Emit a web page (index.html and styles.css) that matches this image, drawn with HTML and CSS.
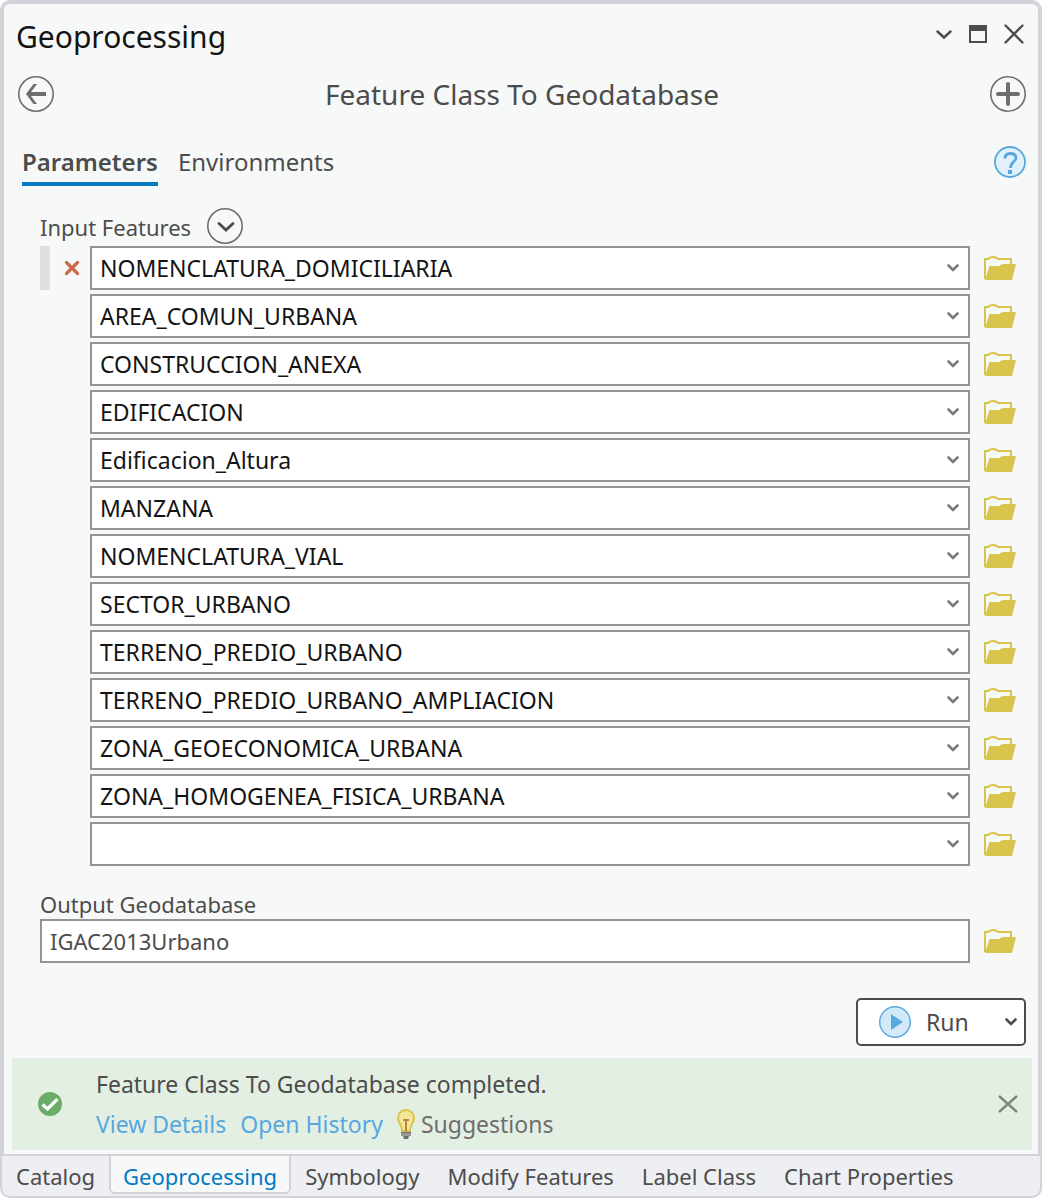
FILE: index.html
```html
<!DOCTYPE html>
<html lang="en">
<head>
<meta charset="utf-8">
<title>Geoprocessing</title>
<meta name="viewport" content="width=device-width, initial-scale=1">
<link rel="stylesheet" href="styles.css">
</head>
<body>
<svg class="sprite" aria-hidden="true">
  <symbol id="chevron" viewBox="0 0 12 8"><path d="M1.500 1.500 6 6 10.500 1.500" fill="none" stroke="currentColor" stroke-width="2.600" stroke-linecap="round"/></symbol>
  <symbol id="folder" viewBox="0 0 32 24"><path d="M1 23V3h3Q6 1 9 1T14 3h13v6" fill="none" stroke="#d9c54d" stroke-width="2"/><path d="M1 24 5.500 10H15q2-2 5-2h12l-4 16z" fill="#d9c54d"/></symbol>
</svg>
<div class="shell">
  <main class="pane">
    <header class="titlebar">
      <h1 class="title">Geoprocessing</h1>
      <div class="window-buttons">
        <button class="icon-button" aria-label="Menu"><svg width="16" height="20" viewBox="0 0 16 20"><path d="M1.500 7.500 8 13.500 14.500 7.500" fill="none" stroke="#4c4c4c" stroke-width="2.400" stroke-linecap="round"/></svg></button>
        <button class="icon-button" aria-label="Maximize"><svg width="18" height="20" viewBox="0 0 18 20"><path d="M1 2h16v16H1z" fill="none" stroke="#4c4c4c" stroke-width="2"/><path d="M0 1h18v6H0z" fill="#4c4c4c"/></svg></button>
        <button class="icon-button" aria-label="Close"><svg width="20" height="20" viewBox="0 0 20 20"><path d="M1.500 1.500 18.500 18.500M18.500 1.500 1.500 18.500" stroke="#4c4c4c" stroke-width="2.300" stroke-linecap="round"/></svg></button>
      </div>
    </header>

    <div class="toolbar">
      <button class="icon-button" aria-label="Back"><svg width="36" height="36" viewBox="0 0 36 36"><circle cx="18" cy="18" r="17.200" fill="none" stroke="#6e6e6e" stroke-width="1.600"/><path d="M28 18H11" stroke="#6e6e6e" stroke-width="4.200"/><path d="M15.500 8H19L11.500 18 19 28h-3.500L8 18z" fill="#6e6e6e"/></svg></button>
      <h2 class="tool-name">Feature Class To Geodatabase</h2>
      <button class="icon-button" aria-label="Add"><svg width="36" height="36" viewBox="0 0 36 36"><circle cx="18" cy="18" r="17.200" fill="none" stroke="#6e6e6e" stroke-width="1.600"/><path d="M18 8v20M8 18h20" stroke="#6e6e6e" stroke-width="4" stroke-linecap="round"/></svg></button>
    </div>

    <nav class="sections">
      <a class="section current" href="#parameters">Parameters</a>
      <a class="section" href="#environments">Environments</a>
      <button class="icon-button help" aria-label="Help"><svg width="32" height="32" viewBox="0 0 32 32"><circle cx="16" cy="16" r="15" fill="#e2f0fb" stroke="#57a8de" stroke-width="1.800"/><path d="M11 12.500C11 9 13 7.500 16.200 7.500S22 9 22 12C22 15.500 16.500 16 16.500 22" fill="none" stroke="#57a8de" stroke-width="2.800"/><path d="M14 24h4v4h-4z" fill="#57a8de"/></svg></button>
    </nav>

    <form class="form" id="parameters">
      <div class="group-label">
        <span class="label" id="inputs-label">Input Features</span>
        <button type="button" class="icon-button" aria-label="Add many"><svg width="36" height="36" viewBox="0 0 36 36"><circle cx="18" cy="18" r="17.200" fill="none" stroke="#6e6e6e" stroke-width="1.600"/><path d="M12 15.500 19 22 26 15.500" fill="none" stroke="#4c4c4c" stroke-width="2.800" stroke-linecap="round"/></svg></button>
      </div>
      <div class="rows" role="group" aria-labelledby="inputs-label">
        <div class="row">
          <span class="row-tools"><span class="grip"></span><button type="button" class="icon-button" aria-label="Remove"><svg width="16" height="16" viewBox="0 0 16 16"><path d="M2.500 2.500 13.500 13.500M13.500 2.500 2.500 13.500" stroke="#cc6a4c" stroke-width="3.200" stroke-linecap="round"/></svg></button></span>
          <span class="combo"><select class="field" aria-label="Input feature 1"><option>NOMENCLATURA_DOMICILIARIA</option></select><svg class="arrow"><use href="#chevron"/></svg></span>
          <button type="button" class="icon-button" aria-label="Browse"><svg class="folder"><use href="#folder"/></svg></button>
        </div>
        <div class="row">
          <span class="combo"><select class="field" aria-label="Input feature 2"><option>AREA_COMUN_URBANA</option></select><svg class="arrow"><use href="#chevron"/></svg></span>
          <button type="button" class="icon-button" aria-label="Browse"><svg class="folder"><use href="#folder"/></svg></button>
        </div>
        <div class="row">
          <span class="combo"><select class="field" aria-label="Input feature 3"><option>CONSTRUCCION_ANEXA</option></select><svg class="arrow"><use href="#chevron"/></svg></span>
          <button type="button" class="icon-button" aria-label="Browse"><svg class="folder"><use href="#folder"/></svg></button>
        </div>
        <div class="row">
          <span class="combo"><select class="field" aria-label="Input feature 4"><option>EDIFICACION</option></select><svg class="arrow"><use href="#chevron"/></svg></span>
          <button type="button" class="icon-button" aria-label="Browse"><svg class="folder"><use href="#folder"/></svg></button>
        </div>
        <div class="row">
          <span class="combo"><select class="field" aria-label="Input feature 5"><option>Edificacion_Altura</option></select><svg class="arrow"><use href="#chevron"/></svg></span>
          <button type="button" class="icon-button" aria-label="Browse"><svg class="folder"><use href="#folder"/></svg></button>
        </div>
        <div class="row">
          <span class="combo"><select class="field" aria-label="Input feature 6"><option>MANZANA</option></select><svg class="arrow"><use href="#chevron"/></svg></span>
          <button type="button" class="icon-button" aria-label="Browse"><svg class="folder"><use href="#folder"/></svg></button>
        </div>
        <div class="row">
          <span class="combo"><select class="field" aria-label="Input feature 7"><option>NOMENCLATURA_VIAL</option></select><svg class="arrow"><use href="#chevron"/></svg></span>
          <button type="button" class="icon-button" aria-label="Browse"><svg class="folder"><use href="#folder"/></svg></button>
        </div>
        <div class="row">
          <span class="combo"><select class="field" aria-label="Input feature 8"><option>SECTOR_URBANO</option></select><svg class="arrow"><use href="#chevron"/></svg></span>
          <button type="button" class="icon-button" aria-label="Browse"><svg class="folder"><use href="#folder"/></svg></button>
        </div>
        <div class="row">
          <span class="combo"><select class="field" aria-label="Input feature 9"><option>TERRENO_PREDIO_URBANO</option></select><svg class="arrow"><use href="#chevron"/></svg></span>
          <button type="button" class="icon-button" aria-label="Browse"><svg class="folder"><use href="#folder"/></svg></button>
        </div>
        <div class="row">
          <span class="combo"><select class="field" aria-label="Input feature 10"><option>TERRENO_PREDIO_URBANO_AMPLIACION</option></select><svg class="arrow"><use href="#chevron"/></svg></span>
          <button type="button" class="icon-button" aria-label="Browse"><svg class="folder"><use href="#folder"/></svg></button>
        </div>
        <div class="row">
          <span class="combo"><select class="field" aria-label="Input feature 11"><option>ZONA_GEOECONOMICA_URBANA</option></select><svg class="arrow"><use href="#chevron"/></svg></span>
          <button type="button" class="icon-button" aria-label="Browse"><svg class="folder"><use href="#folder"/></svg></button>
        </div>
        <div class="row">
          <span class="combo"><select class="field" aria-label="Input feature 12"><option>ZONA_HOMOGENEA_FISICA_URBANA</option></select><svg class="arrow"><use href="#chevron"/></svg></span>
          <button type="button" class="icon-button" aria-label="Browse"><svg class="folder"><use href="#folder"/></svg></button>
        </div>
        <div class="row">
          <span class="combo"><select class="field" aria-label="Input feature 13"><option></option></select><svg class="arrow"><use href="#chevron"/></svg></span>
          <button type="button" class="icon-button" aria-label="Browse"><svg class="folder"><use href="#folder"/></svg></button>
        </div>
      </div>
      <label class="label output-label" for="output">Output Geodatabase</label>
      <div class="output-row">
        <input class="field output" id="output" type="text" value="IGAC2013Urbano">
        <button type="button" class="icon-button" aria-label="Browse"><svg class="folder"><use href="#folder"/></svg></button>
      </div>
    </form>

    <div class="actions">
      <button class="run">
        <svg width="32" height="32" viewBox="0 0 32 32"><circle cx="16" cy="16" r="15.300" fill="#d3e9f8" stroke="#57a8de" stroke-width="1.400"/><path d="M12 8 24 16 12 24z" fill="#57a8de"/></svg>
        <span class="run-text">Run</span>
        <svg class="arrow"><use href="#chevron"/></svg>
      </button>
    </div>

    <section class="message" role="status">
      <svg width="24" height="24" viewBox="0 0 24 24"><circle cx="12" cy="12" r="12" fill="#69ad69"/><path d="M4.500 12.500 9.500 17 19.500 7" fill="none" stroke="#fff" stroke-width="3.200"/></svg>
      <div class="message-body">
        <p class="message-text">Feature Class To Geodatabase completed.</p>
        <p class="message-links">
          <a href="#details">View Details</a>
          <a href="#history">Open History</a>
          <span class="suggestions"><svg width="18" height="30" viewBox="0 0 18 30"><path d="M9 1C4.500 1 1 4.500 1 9c0 5 4 6.500 4 13h8c0-6.500 4-8 4-13 0-4.500-3.500-8-8-8z" fill="#f2e79b" stroke="#d9c54d" stroke-width="2"/><path d="M6 11h6M9 11v11" fill="none" stroke="#b98548" stroke-width="2"/><path d="M4 23h10v4H4z" fill="#9a9a9a"/><path d="M4 23h10v1H4zM6 27h6l-1 3H7z" fill="#6e6e6e"/></svg>Suggestions</span>
        </p>
      </div>
      <button class="icon-button" aria-label="Dismiss"><svg width="20" height="18" viewBox="0 0 20 18"><path d="M1 1 19 17M19 1 1 17" stroke="#828782" stroke-width="2.400"/></svg></button>
    </section>
  </main>

  <nav class="tabs">
    <a class="tab" href="#catalog">Catalog</a>
    <a class="tab active" href="#geoprocessing">Geoprocessing</a>
    <a class="tab" href="#symbology">Symbology</a>
    <a class="tab" href="#modify">Modify Features</a>
    <a class="tab" href="#label">Label Class</a>
    <a class="tab" href="#chart">Chart Properties</a>
  </nav>
</div>
</body>
</html>
```
FILE: styles.css
```css
* { box-sizing: border-box; }

body {
  margin: 0;
  background: #fff;
  color: #4c4c4c;
  font: 23px/32px "Noto Sans", "Open Sans", sans-serif;
}

h1, h2, p { margin: 0; font-weight: 400; }
a { text-decoration: none; color: inherit; }
svg { display: block; flex: none; }
button, input, select { font: inherit; color: inherit; }

.sprite { position: absolute; width: 0; height: 0; }

.icon-button {
  display: block;
  flex: none;
  padding: 0;
  border: 0;
  background: none;
}

.shell {
  display: flex;
  flex-direction: column;
  min-height: 100vh;
  border: 2px solid #d2d3d8;
  border-radius: 10px;
  background: #eeeff2;
  overflow: hidden;
}

.pane {
  display: flex;
  flex: 1;
  flex-direction: column;
  border: 2px solid #d2d3d8;
  border-radius: 8px 8px 0 0;
  background: #f7f9f8;
}

.titlebar {
  display: flex;
  align-items: center;
  justify-content: space-between;
  padding: 11px 14px 0 12px;
}
.title { font-size: 30px; line-height: 44px; color: #141414; }
.window-buttons { display: flex; gap: 17px; margin-top: -6px; }

.toolbar {
  display: flex;
  align-items: center;
  justify-content: space-between;
  padding: 13px 12px 0 14px;
}
.tool-name { font-size: 28px; line-height: 44px; }

.sections {
  display: flex;
  align-items: flex-start;
  gap: 20px;
  padding: 30px 12px 0 18px;
}
.section {
  padding-bottom: 4px;
  border-bottom: 4px solid transparent;
  font-size: 24px;
}
.current { border-color: #007ac2; font-weight: 600; }
.help { margin-left: auto; }

.form { padding: 20px 22px 0 36px; }
.group-label { display: flex; align-items: center; gap: 16px; height: 40px; }
.label { padding-top: 2px; font-size: 22px; line-height: 30px; }

.rows { display: grid; gap: 4px; }
.row {
  display: grid;
  grid-template-columns: 36px 1fr 32px;
  column-gap: 14px;
  align-items: center;
}
.combo { display: grid; grid-column: 2; align-items: center; }
.combo > * { grid-area: 1 / 1; }
.combo .arrow { justify-self: end; margin-right: 11px; color: #7a7a7a; pointer-events: none; }
.row-tools { display: flex; align-items: center; justify-content: space-between; width: 40px; }
.grip { width: 10px; height: 44px; background: #dfdfdf; }

.field {
  width: 100%;
  min-width: 0;
  height: 44px;
  padding: 0 8px;
  border: 2px solid #949494;
  border-radius: 0;
  background: #fff;
  color: #141414;
  appearance: none;
}
.arrow { width: 12px; height: 8px; }
.folder { width: 32px; height: 24px; }

.output-label { display: block; margin-top: 21px; }
.output-row { display: flex; align-items: center; gap: 14px; }
.output { flex: 1; color: #4c4c4c; font-size: 22px; }

.actions { display: flex; justify-content: flex-end; padding: 35px 12px 12px; }
.run {
  display: flex;
  align-items: center;
  width: 170px;
  height: 48px;
  padding: 0 7px 0 21px;
  border: 2px solid #4c4c4c;
  border-radius: 5px;
  background: #fff;
}
.run-text { flex: 1; padding-left: 15px; text-align: left; }

.message {
  display: flex;
  align-items: center;
  margin: 0 6px 4px 8px;
  padding: 6px 14px 6px 26px;
  background: #e4efe3;
}
.message-body { flex: 1; padding-left: 34px; }
.message-text { line-height: 40px; }
.message-links { display: flex; gap: 14px; line-height: 40px; color: #57a8de; }
.suggestions { display: flex; align-items: center; gap: 6px; color: #6e6e6e; }

.tabs { display: flex; height: 40px; font-size: 22px; }
.tab { padding: 4px 14px; white-space: nowrap; }
.active {
  height: 38px;
  padding: 4px 12px;
  border: solid #d2d3d8;
  border-width: 0 2px 2px;
  border-radius: 0 0 6px 6px;
  background: #f7f9f8;
  color: #007ac2;
}
```
